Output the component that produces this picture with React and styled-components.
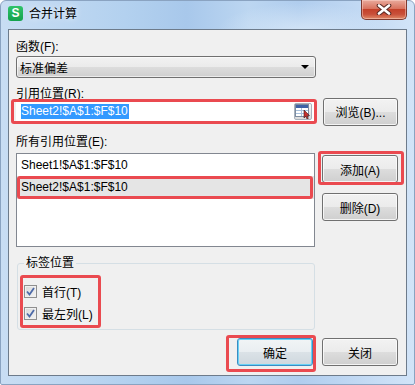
import React from "react";
import styled, { createGlobalStyle, css } from "styled-components";

const GlobalStyle = createGlobalStyle`
  html, body { margin: 0; padding: 0; background: #ffffff; }
  body { font-family: "Liberation Sans", "Noto Sans CJK SC", sans-serif; font-size: 12px; color: #000; }
  * { box-sizing: border-box; }
`;

const FONT = `"Liberation Sans", "Noto Sans CJK SC", sans-serif`;

const Window = styled.div`
  position: relative;
  width: 415px;
  height: 385px;
  display: flex;
  flex-direction: column;
  padding: 0 7px 8px 7px;
  border: 1px solid #8aa3c1;
  border-radius: 6px 6px 2px 2px;
  background:
    radial-gradient(ellipse 120px 40px at 300px 30px, rgba(225, 238, 250, 0.7), rgba(225, 238, 250, 0) 70%),
    linear-gradient(to right, #c8ddf3 0%, #b3d1ef 30%, #a8c8eb 45%, #bcd6f1 60%, #b0cdee 72%, #d2e4f8 100%);
`;

const TitleBar = styled.div`
  height: 28px;
  display: flex;
  align-items: flex-start;
  margin: 0 -7px 0 0;
`;

const AppIcon = styled.div`
  width: 15px;
  height: 15px;
  margin-top: 5px;
  border-radius: 3px;
  background: linear-gradient(#2fc36a, #14a24c);
  color: #fff;
  font: bold 12px ${FONT};
  line-height: 15px;
  text-align: center;
  display: flex;
  align-items: center;
  justify-content: center;
`;

const Title = styled.div`
  margin: 5px 0 0 6px;
  font: 12px ${FONT};
  line-height: 16px;
  color: #000;
  text-shadow: 0 0 6px rgba(255, 255, 255, 0.9);
`;

const CloseButton = styled.div`
  margin: -1px 7px 0 auto;
  width: 46px;
  height: 20px;
  border: 1px solid #7e3a30;
  border-top: none;
  border-radius: 0 0 5px 5px;
  background: linear-gradient(#e9ab9d 0%, #d9735f 45%, #c4412a 50%, #c9503a 75%, #e08a68 100%);
  box-shadow: inset 0 0 0 1px rgba(255, 220, 210, 0.45);
  display: flex;
  align-items: center;
  justify-content: center;
`;

const Client = styled.div`
  flex: 1;
  display: flex;
  flex-direction: column;
  border: 1px solid #6d7b8b;
  background: #f0f0f0;
  padding: 9px 8px 9px 7px;
`;

const Label = styled.div`
  font: 12px ${FONT};
  line-height: ${(p) => p.$lh || 16}px;
  margin-top: ${(p) => p.$mt || 0}px;
  height: ${(p) => p.$lh || 16}px;
`;

const Row = styled.div`
  display: flex;
  align-items: ${(p) => p.$align || "center"};
  gap: 7px;
  margin-top: ${(p) => p.$mt || 0}px;
`;

const Select = styled.div`
  margin-top: 1px;
  width: 300px;
  height: 22px;
  border: 1px solid #707070;
  border-radius: 3px;
  background: linear-gradient(#f2f2f2 0%, #ebebeb 50%, #dddddd 50%, #cfcfcf 100%);
  box-shadow: inset 0 0 0 1px rgba(255, 255, 255, 0.6);
  display: flex;
  align-items: center;
  justify-content: space-between;
  padding: 0 6px 0 3px;
  font: 12px ${FONT};
`;

const Arrow = styled.span`
  width: 0;
  height: 0;
  border-left: 4px solid transparent;
  border-right: 4px solid transparent;
  border-top: 4px solid #000;
`;

const Anchor = styled.div`
  position: relative;
  flex: none;
`;

const Highlight = styled.div`
  position: absolute;
  top: ${(p) => p.$t}px;
  right: ${(p) => p.$r}px;
  bottom: ${(p) => p.$b}px;
  left: ${(p) => p.$l}px;
  border: 3px solid #ea4a50;
  border-radius: 3px;
  pointer-events: none;
`;

const RefField = styled.div`
  width: 300px;
  height: 21px;
  background: #fff;
  display: flex;
  align-items: center;
  justify-content: space-between;
  padding: 0 4px 0 5px;
`;

const Selected = styled.span`
  background: #3399ff;
  color: #fff;
  font: 12px ${FONT};
  line-height: 15px;
  padding: 0 1px 0 0;
`;

const PickerBtn = styled.div`
  width: 18px;
  height: 17px;
  border: 1px solid #a9b2bd;
  border-radius: 2px;
  background: linear-gradient(#f7f7f7, #dcdcdc);
  display: flex;
  align-items: center;
  justify-content: center;
`;

const buttonBase = css`
  width: 76px;
  height: 28px;
  padding: 0;
  border: 1px solid #707070;
  border-radius: 3px;
  background: linear-gradient(#f2f2f2 0%, #ebebeb 50%, #dddddd 50%, #cfcfcf 100%);
  box-shadow: inset 0 0 0 1px rgba(252, 252, 252, 0.8);
  font: 12px ${FONT};
  color: #000;
  display: flex;
  align-items: center;
  justify-content: center;
`;

const Button = styled.div`
  ${buttonBase};
  margin: ${(p) => p.$m || "0"};
  ${(p) =>
    p.$primary &&
    css`
      border-color: #3c8cc2;
      background: linear-gradient(#f1f4f6 0%, #e9eef1 50%, #dbe2e7 50%, #cfd8de 100%);
      box-shadow: inset 0 0 0 1px #69d2f5;
    `}
`;

const ListBox = styled.div`
  width: 300px;
  height: 94px;
  border: 1px solid #828790;
  background: #fff;
  display: flex;
  flex-direction: column;
`;

const ListItem = styled.div`
  position: relative;
  height: ${(p) => p.$h}px;
  line-height: ${(p) => p.$h}px;
  padding-left: 4px;
  font: 12px ${FONT};
  line-height: ${(p) => p.$h}px;
  background: ${(p) => (p.$selected ? "#e5e5e5" : "transparent")};
`;

const SideButtons = styled.div`
  display: flex;
  flex-direction: column;
  gap: 10px;
  padding-top: 2px;
`;

const Group = styled.fieldset`
  margin: 8px 0 0 1px;
  width: 298px;
  padding: 0 0 5px 0;
  border: 1px solid #d5dfe5;
  border-radius: 3px;
`;

const Legend = styled.legend`
  margin-left: 6px;
  padding: 0 2px;
  font: 12px ${FONT};
  line-height: 16px;
`;

const CheckList = styled.div`
  position: relative;
  margin: 9px 0 0 6px;
  width: 72px;
  display: flex;
  flex-direction: column;
`;

const CheckRow = styled.div`
  height: 22px;
  display: flex;
  align-items: center;
  gap: 5px;
  font: 12px ${FONT};
`;

const CheckBox = styled.span`
  width: 13px;
  height: 13px;
  border: 1px solid #8f8f8f;
  background: linear-gradient(135deg, #d8d8d8, #f4f4f4);
  box-shadow: inset 0 0 0 1px #f0f0f0;
  display: flex;
  align-items: center;
  justify-content: center;
`;

const Footer = styled.div`
  margin-top: 8px;
  display: flex;
  justify-content: flex-end;
  gap: 9px;
`;

const CloseX = () => (
  <svg width="16" height="11" viewBox="0 0 16 11">
    <path d="M3 1.5 L13 9.5 M13 1.5 L3 9.5" stroke="#5a2a24" strokeWidth="4.6" strokeLinecap="round" />
    <path d="M3 1.5 L13 9.5 M13 1.5 L3 9.5" stroke="#ffffff" strokeWidth="2.6" strokeLinecap="round" />
  </svg>
);

const PickerIcon = () => (
  <svg width="16" height="15" viewBox="0 0 16 15">
    <rect x="0.5" y="0.5" width="13" height="12" fill="#ffffff" stroke="#7d8ca0" />
    <rect x="1" y="1" width="12" height="3" fill="#3f62a6" />
    <line x1="1" y1="6.5" x2="13" y2="6.5" stroke="#a8c1dc" />
    <line x1="1" y1="9.5" x2="13" y2="9.5" stroke="#a8c1dc" />
    <line x1="6.5" y1="4" x2="6.5" y2="12" stroke="#a8c1dc" />
    <path d="M9 6 L9 14 L10.8 12.3 L12 15 L13.3 14.4 L12.1 11.8 L14.5 11.6 Z" fill="#c9312e" stroke="#3a1a1a" strokeWidth="0.6" />
  </svg>
);

const CheckMark = () => (
  <svg width="9" height="9" viewBox="0 0 9 9">
    <path d="M1 4.5 L3.5 7.5 L8 1" fill="none" stroke="#4d6aa8" strokeWidth="1.8" />
  </svg>
);

export default function App() {
  return (
    <>
      <GlobalStyle />
      <Window>
        <TitleBar>
          <AppIcon>S</AppIcon>
          <Title>合并计算</Title>
          <CloseButton>
            <CloseX />
          </CloseButton>
        </TitleBar>
        <Client>
          <Label>函数(F):</Label>
          <Select>
            <span>标准偏差</span>
            <Arrow />
          </Select>
          <Label $mt={9} $lh={14}>引用位置(R):</Label>
          <Row>
            <Anchor>
              <RefField>
                <Selected>Sheet2!$A$1:$F$10</Selected>
                <PickerBtn>
                  <PickerIcon />
                </PickerBtn>
              </RefField>
              <Highlight $t={-2} $r={-1} $b={-2} $l={-5} />
            </Anchor>
            <Button $m="-4px 0">浏览(B)...</Button>
          </Row>
          <Label $mt={12}>所有引用位置(E):</Label>
          <Row $mt={3} $align="flex-start">
            <ListBox>
              <ListItem $h={22}>Sheet1!$A$1:$F$10</ListItem>
              <ListItem $h={23} $selected>
                Sheet2!$A$1:$F$10
                <Highlight $t={0} $r={1} $b={0} $l={0} />
              </ListItem>
            </ListBox>
            <SideButtons>
              <Anchor>
                <Button>添加(A)</Button>
                <Highlight $t={-4} $r={-6} $b={-2} $l={-4} />
              </Anchor>
              <Button>删除(D)</Button>
            </SideButtons>
          </Row>
          <Group>
            <Legend>标签位置</Legend>
            <CheckList>
              <CheckRow>
                <CheckBox>
                  <CheckMark />
                </CheckBox>
                首行(T)
              </CheckRow>
              <CheckRow>
                <CheckBox>
                  <CheckMark />
                </CheckBox>
                最左列(L)
              </CheckRow>
              <Highlight $t={-5} $r={-5} $b={-4} $l={-4} />
            </CheckList>
          </Group>
          <Footer>
            <Anchor>
              <Button $primary>确定</Button>
              <Highlight $t={-3} $r={-3} $b={-6} $l={-11} />
            </Anchor>
            <Button>关闭</Button>
          </Footer>
        </Client>
      </Window>
    </>
  );
}
